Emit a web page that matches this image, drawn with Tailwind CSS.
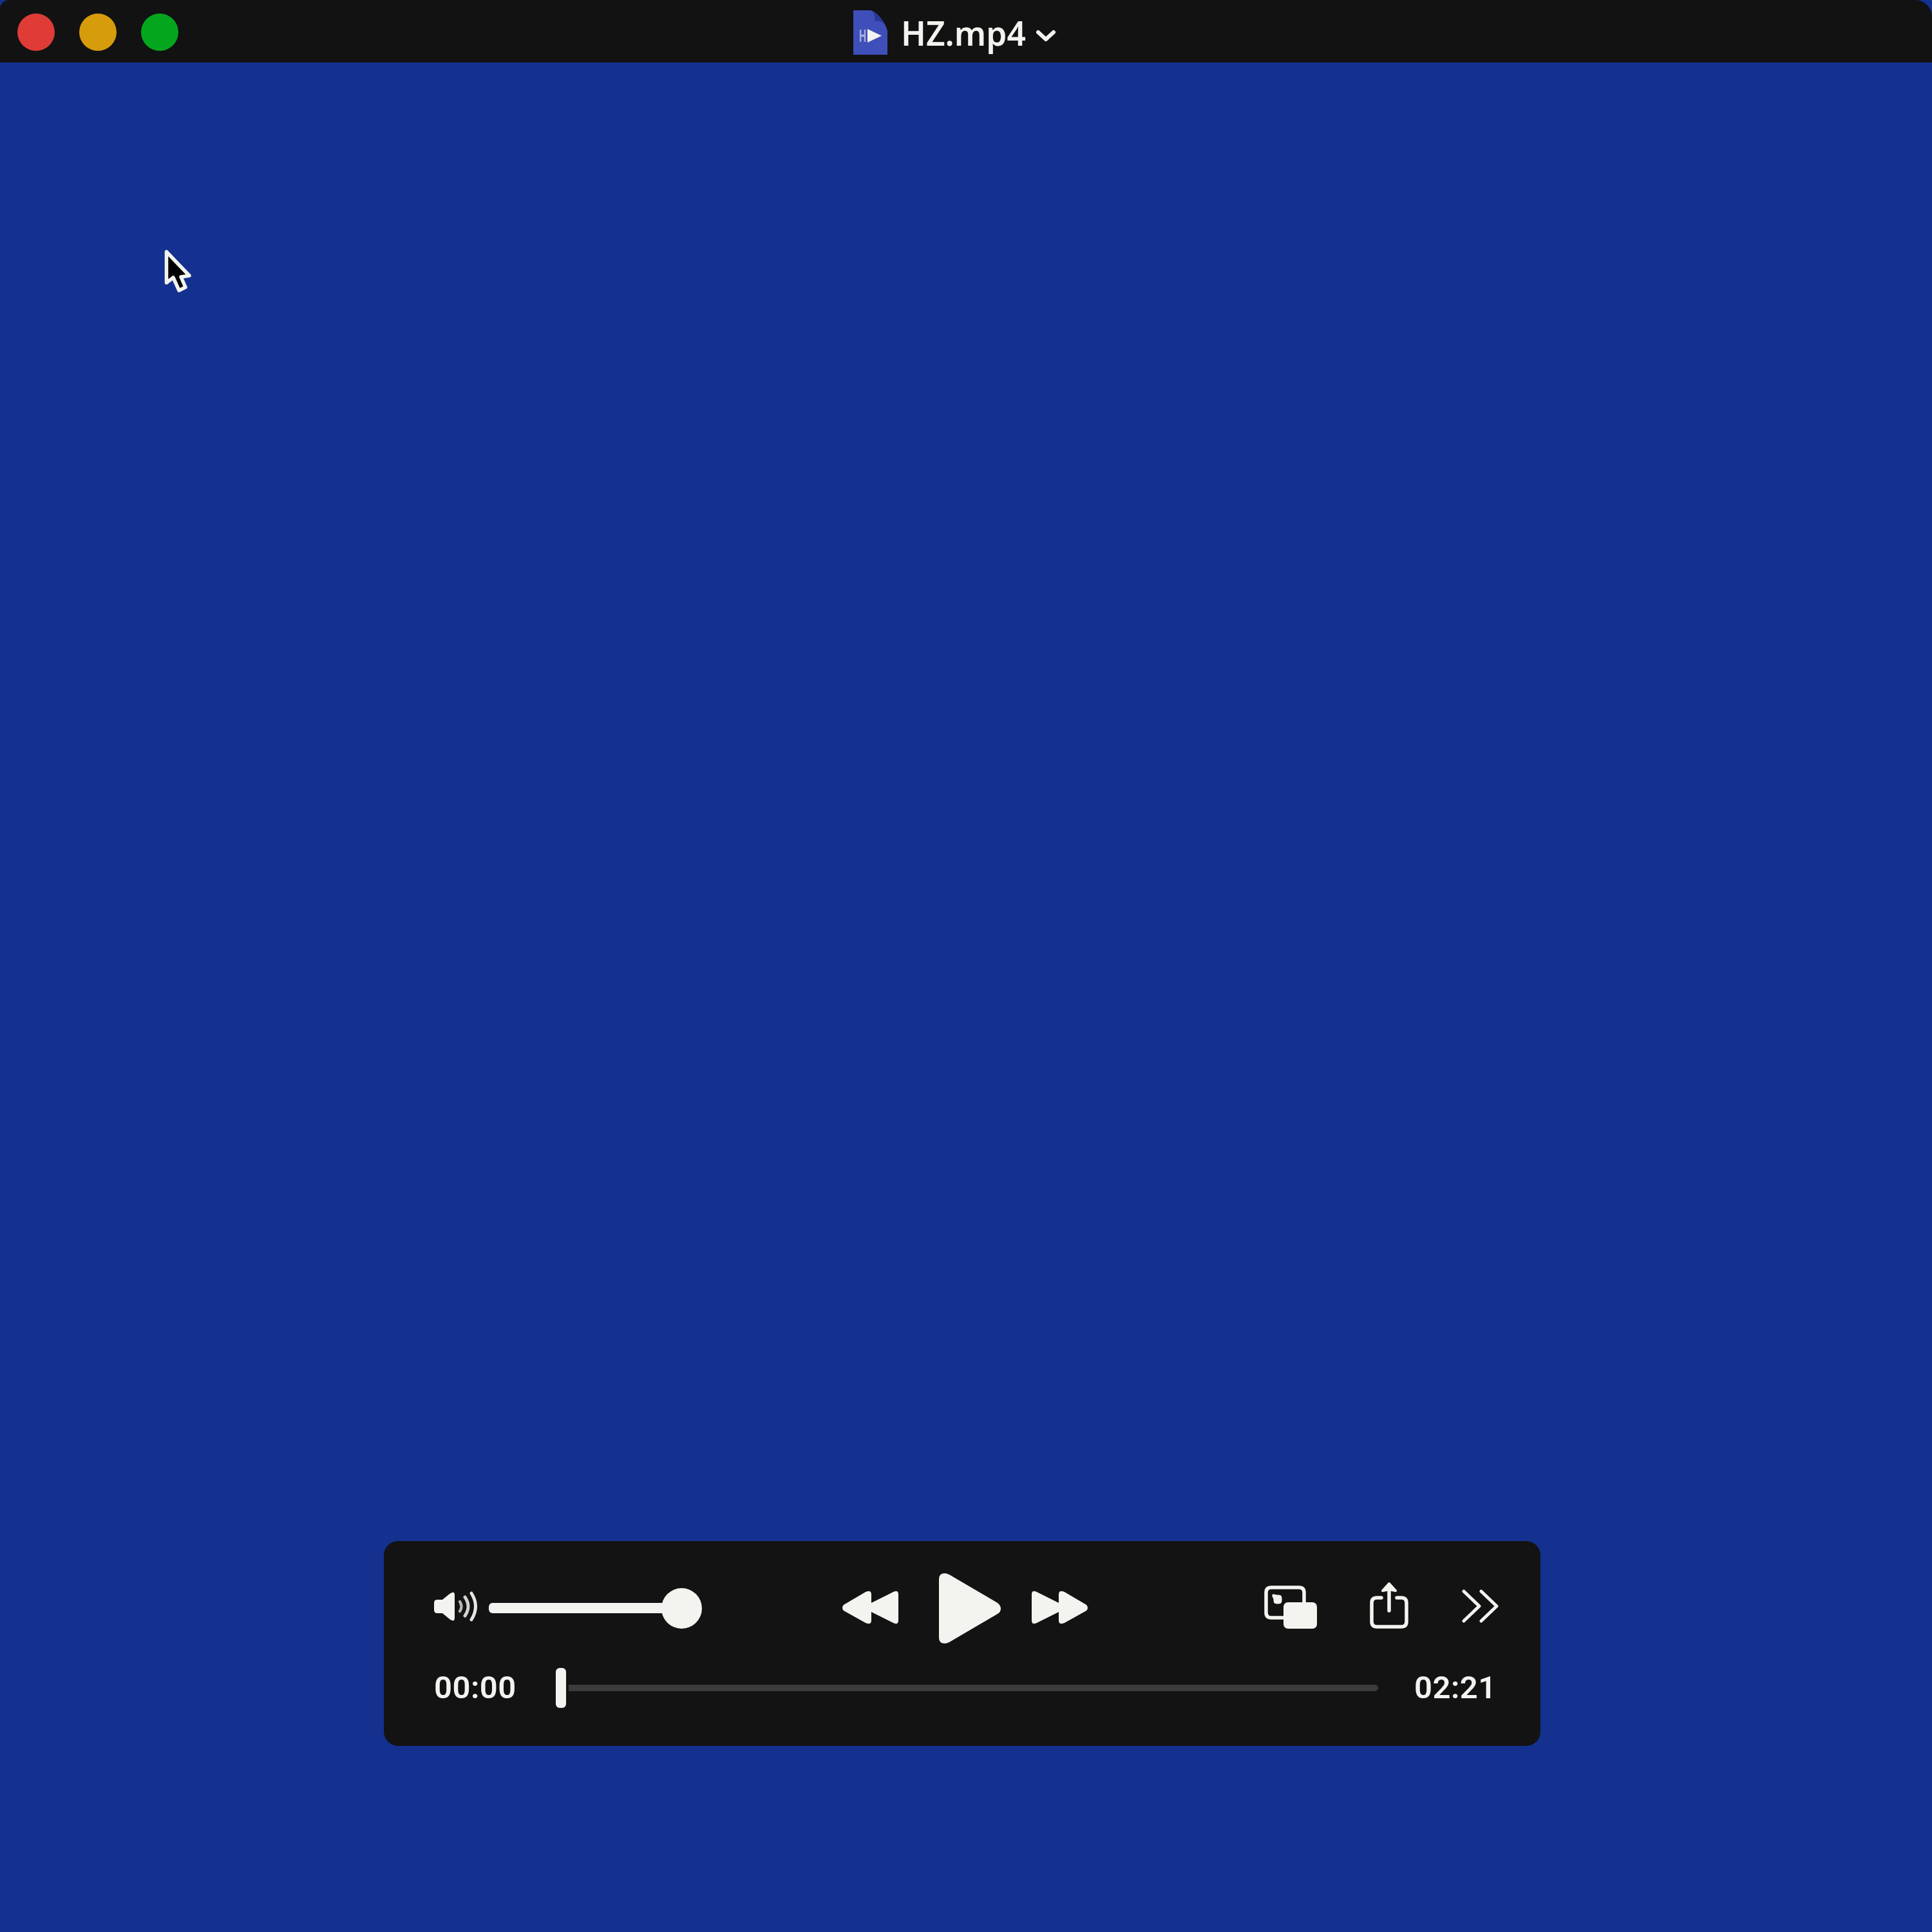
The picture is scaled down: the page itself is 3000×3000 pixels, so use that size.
<!DOCTYPE html>
<html lang="en">
<head>
    <meta charset="UTF-8">
    <meta name="viewport" content="width=device-width, initial-scale=1.0">
    <title>HZ.mp4</title>
    <script src="https://cdn.jsdelivr.net/npm/@tailwindcss/browser@4"></script>
</head>
<body class="bg-[#143190]">
    <div class="relative w-[3000px] h-[3000px] flex flex-col bg-[#143190] overflow-hidden text-[#f3f3ef]">

        <!-- Title bar -->
        <header class="relative h-[97px] shrink-0 flex items-center justify-center bg-[#121212] rounded-tl-[14px] rounded-tr-[26px]">
            <div class="absolute left-[27px] top-[21px] flex gap-[38px]">
                <span class="size-[58px] rounded-full bg-[#e03c37]"></span>
                <span class="size-[58px] rounded-full bg-[#d69c0b]"></span>
                <span class="size-[58px] rounded-full bg-[#04a61e]"></span>
            </div>
            <div class="flex items-center mr-[36px] pt-1">
                <svg class="w-[53px] h-[70px]" viewBox="0 0 53 70">
                    <path d="M0 0H27C37 3 50 19 53 32V69H0Z" fill="#3f4fb9"/>
                    <path d="M29 2C33 6 34 12 33 17C39 16 45 17 50 23C45 14 37 6 29 2Z" fill="#29379a"/>
                    <path d="M22 29L44 39.500L22 50Z" fill="#f3f3ef"/>
                    <text x="9" y="49" font-family="Liberation Sans" font-size="27" font-weight="bold" textLength="11" lengthAdjust="spacingAndGlyphs" fill="#aab2e4">H</text>
                </svg>
                <h1 class="ml-[21px] pt-px font-['Noto_Sans'] font-semibold text-[51.5px] leading-[70px]">HZ.mp4</h1>
                <svg class="ml-[16px] w-[30px] h-[70px]" viewBox="0 0 30 70" fill="none" stroke="#f3f3ef" stroke-width="6" stroke-linecap="round" stroke-linejoin="round">
                    <path d="M3 34L15 45L27 34"/>
                </svg>
            </div>
        </header>

        <!-- Video area -->
        <main class="flex-1 flex flex-col justify-end pl-[596px] pb-[289px]">

            <!-- Playback controls -->
            <div class="w-[1796px] h-[318px] flex flex-col gap-3 pt-12 pl-[78px] rounded-[22px] bg-[#131313]">
                <div class="h-28 flex items-center">
                    <!-- Volume -->
                    <svg class="w-[68px] h-28" viewBox="0 0 68 112" fill="none">
                        <path d="M5 43H13L24 34Q32 28 32 36V71Q32 79 24 73L13 64H5Q0 64 0 59V48Q0 43 5 43Z" fill="#f3f3ef"/>
                        <path d="M40 46Q45 53.500 40 61" stroke="#b5b5b2" stroke-width="4.500" stroke-linecap="round"/>
                        <path d="M48 39Q58 53.500 48 68" stroke="#d2d2cf" stroke-width="5" stroke-linecap="round"/>
                        <path d="M58 33Q71 53.500 58 74" stroke="#e6e6e2" stroke-width="5" stroke-linecap="round"/>
                    </svg>
                    <div class="ml-[17px] flex items-center">
                        <div class="w-[274px] h-4 rounded-l-[6px] bg-[#f3f3ef]"></div>
                        <div class="-ml-1.5 size-[63px] rounded-full bg-[#f3f3ef]"></div>
                    </div>

                    <!-- Transport -->
                    <svg class="ml-[217px] w-[88px] h-28" viewBox="0 0 88 112" fill="#f3f3ef">
                        <path d="M3 51L37 31Q46 27 46 35V48L80 31Q88 27 88 35V75Q88 83 80 79L46 62V75Q46 83 37 79L3 60Q-1 55.500 3 51Z"/>
                    </svg>
                    <svg class="ml-[63px] w-[97px] h-28" viewBox="0 0 97 112" fill="#f3f3ef">
                        <path d="M0 11Q0 2 9 2Q12 2 16 4L91 48Q96 52 96 57Q96 62 91 65L16 109Q12 111 9 111Q0 111 0 102Z"/>
                    </svg>
                    <svg class="ml-[47px] w-[88px] h-28" viewBox="0 0 88 112" fill="#f3f3ef">
                        <path d="M85 51L51 31Q42 27 42 35V48L8 31Q0 27 0 35V75Q0 83 8 79L42 62V75Q42 83 51 79L85 60Q89 55.500 85 51Z"/>
                    </svg>

                    <!-- Picture in picture -->
                    <svg class="ml-[273px] w-[82px] h-28" viewBox="0 0 82 112" fill="none">
                        <path d="M31 71H11Q3 71 3 63V32Q3 24 11 24H54Q62 24 62 32V48" stroke="#f3f3ef" stroke-width="5.500"/>
                        <path d="M13 35H16L19 36H23Q27 36 27 40V45Q27 49 23 49H19Q15 49 15 45V42L13 38Z" fill="#f3f3ef" stroke="#f3f3ef" stroke-width="1"/>
                        <rect x="30" y="47" width="52" height="41" rx="7" fill="#f3f3ef"/>
                    </svg>
                    <!-- Share -->
                    <svg class="ml-[82px] w-[60px] h-28" viewBox="0 0 60 112" fill="none" stroke="#f3f3ef" stroke-width="5.500" stroke-linecap="round" stroke-linejoin="round">
                        <path d="M18 40H11Q3 40 3 48V77Q3 85 11 85H49Q57 85 57 77V48Q57 40 49 40H42"/>
                        <path d="M30 20V60"/>
                        <path d="M20 29L30 18L40 29L30 27Z" fill="#f3f3ef" stroke-width="4"/>
                    </svg>
                    <svg class="ml-[83px] w-[57px] h-28" viewBox="0 0 57 112" fill="none" stroke="#f3f3ef" stroke-width="5" stroke-linecap="round" stroke-linejoin="round">
                        <path d="M3 30L27 53L3 76"/>
                        <path d="M30 30L54 53L30 76"/>
                    </svg>
                </div>

                <!-- Timeline -->
                <div class="h-28 flex items-center font-['Roboto'] font-semibold text-[49px] leading-none tracking-[0.5px]">
                    <span class="w-[189px] -mt-0.5">00:00</span>
                    <div class="w-4 h-[62px] rounded-[6px] bg-[#f3f3ef]"></div>
                    <div class="ml-1 w-[1257px] h-[10px] rounded-r-[5px] bg-[#3c3c3c]"></div>
                    <span class="ml-[56px] -mt-0.5">02:21</span>
                </div>
            </div>
        </main>

        <!-- Mouse pointer -->
        <svg class="absolute left-[254px] top-[386px] w-[48px] h-[72px]" viewBox="0 0 48 72">
            <path d="M4.500 5V53L15 45L24 65L34 60L27 44L40 42Z" fill="#000" stroke="#f3f3ef" stroke-width="5.500" stroke-linejoin="round"/>
        </svg>
    </div>
</body>
</html>
